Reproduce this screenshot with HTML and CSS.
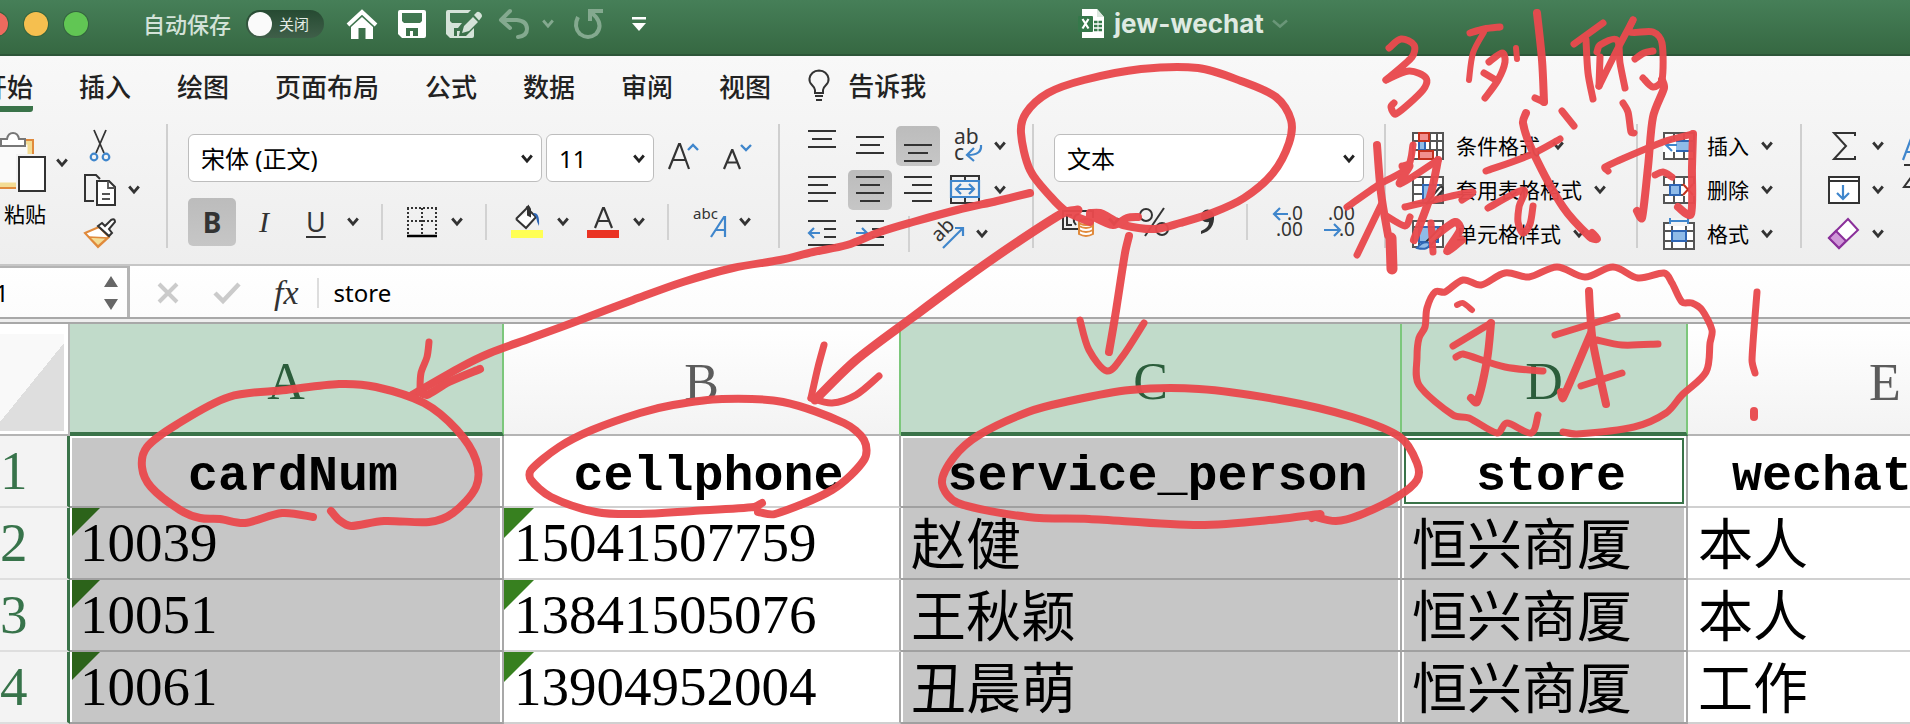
FILE: index.html
```html
<!DOCTYPE html>
<html lang="zh-CN">
<head>
<meta charset="utf-8">
<title>jew-wechat</title>
<link rel="stylesheet" href="styles.css">
</head>
<body>
<svg class="defs" width="0" height="0" aria-hidden="true">
  <symbol id="chev" viewBox="0 0 12 10"><path d="M1.2 1.5 6 7.2 10.8 1.500" fill="none" stroke="currentColor" stroke-width="2.8"/></symbol>
</svg>
<header class="titlebar">
  <div class="lights"><i class="light red"></i><i class="light yellow"></i><i class="light green"></i></div>
  <label class="autosave" for="autosave">自动保存</label>
  <span class="switch"><input type="checkbox" id="autosave"><span>关闭</span></span>
  <div class="quick">
    <button aria-label="主页"><svg width="32" height="30" viewBox="0 0 32 30"><path d="M2 16 16 3 30 16" fill="none" stroke="#fff" stroke-width="4"/><path d="M5 18 16 8 27 18V30H19.500V19H12.500V30H5Z" fill="#fff"/></svg></button>
    <button aria-label="保存"><svg width="28" height="28" viewBox="0 0 28 28"><path fill="#fff" fill-rule="evenodd" d="M2 0H26Q28 0 28 2V26Q28 28 26 28H4L0 24V2Q0 0 2 0ZM4 3V11L6 13H22L24 11V3ZM8 18V26H12V21H15V26H20V18Z"/></svg></button>
    <button aria-label="另存为"><svg width="36" height="30" viewBox="0 0 36 30"><path fill="#d5e3d9" fill-rule="evenodd" d="M2 1H25L22 4H4V12L6 14H16L12 19H8V27H11V22H14L13 27H20L28 19V27Q28 29 26 29H4L0 25V3Q0 1 2 1Z"/><path fill="#d5e3d9" d="M16 24 18 17 27 8 32 13 23 22ZM28 6 31 3Q33 2 35 4.500T35 9L33 11.500Z"/></svg></button>
    <button class="undo" aria-label="撤销"><svg width="32" height="30" viewBox="0 0 32 30"><path d="M12 2 3 11 12 19M4 11H19Q29 12 29 20 29 27 20 28" fill="none" stroke="#84a98f" stroke-width="4" stroke-linecap="round" stroke-linejoin="round"/></svg></button>
    <button class="faded" aria-label="撤销选项"><svg width="12" height="10"><use href="#chev"/></svg></button>
    <button class="redo" aria-label="重做"><svg width="30" height="32" viewBox="0 0 30 32"><path d="M4 9Q-1 19 6 26 14 32 22 26 29 18 22 9L17 4M16 13V3H29" fill="none" stroke="#84a98f" stroke-width="4"/></svg></button>
    <button class="more" aria-label="自定义工具栏"><svg width="14" height="14" viewBox="0 0 14 14"><path d="M0 0H14V2.500H0ZM0 6H14L7 14Z" fill="#fff"/></svg></button>
  </div>
  <div class="doc">
    <svg width="26" height="30" viewBox="0 0 26 30"><path d="M4 0H19L26 8V29H4Z" fill="#fff"/><path d="M19 0V8H26" fill="#dce8df"/><rect y="7" width="15" height="16" rx="1" fill="#35784a"/><path d="M4.500 10 10.500 19.500M10.500 10 4.500 19.500" stroke="#fff" stroke-width="2.200"/><path d="M16 13H19.500M20.500 13H24M16 17H19.500M20.500 17H24M16 21H19.500M20.500 21H24" stroke="#35784a" stroke-width="2.500"/></svg>
    <h1>jew-wechat</h1>
    <svg class="dim" width="16" height="10" viewBox="0 0 16 10"><path d="M1 1.500 8 7.500 15 1.500" fill="none" stroke="#6a9678" stroke-width="2.500"/></svg>
  </div>
</header>

<div class="chrome">
<nav class="tabs">
  <a href="#" class="active">开始</a><a href="#">插入</a><a href="#">绘图</a><a href="#">页面布局</a><a href="#">公式</a><a href="#">数据</a><a href="#">审阅</a><a href="#">视图</a>
  <a href="#" class="tell"><svg width="22" height="34" viewBox="0 0 22 34"><path d="M7 24V21Q7 19 4 16 1 13 1.500 9.500 3 2 11 1.500 19 2 20.500 9.500 21 13 18 16 15 19 15 21V24ZM7 27H15M8 31H14" fill="none" stroke="#333" stroke-width="2"/></svg>告诉我</a>
</nav>

<div class="ribbon">
  <section class="group clip">
    <button class="paste"><svg width="46" height="66" viewBox="0 0 46 66"><path d="M0 10H32V55H0Z" fill="#fafafa"/><path d="M26 10H30V23M0 53H16" fill="none" stroke="#f3dc94" stroke-width="5"/><path d="M26 8H33V22M0 56H16" fill="none" stroke="#e08a3c" stroke-width="2"/><path d="M1 14V7H7Q8 1 13 1T19 7H25V14Z" fill="#fff" stroke="#777" stroke-width="2"/><path d="M16 22H46V61H16Z" fill="#f2f2f2"/><path d="M19 25H45V59H19Z" fill="#fff" stroke="#333" stroke-width="2"/></svg><span>粘贴</span></button>
    <svg class="paste-chev" width="12" height="10"><use href="#chev"/></svg>
    <div class="clip-tools">
      <button aria-label="剪切"><svg width="32" height="34" viewBox="0 0 32 34"><path d="M10 1 20 24M22 1 12 24" stroke="#333" stroke-width="1.800"/><g fill="none" stroke="#3f86cc" stroke-width="2.200"><circle cx="10" cy="28" r="3.300"/><circle cx="22" cy="28" r="3.300"/></g></svg></button>
      <button class="split" aria-label="复制"><svg width="32" height="34" viewBox="0 0 32 34"><path d="M10 28H1V2H12L16 6" fill="none" stroke="#333" stroke-width="2"/><path d="M13 8H25L31 14V32H13Z" fill="#fff" stroke="#333" stroke-width="2"/><path d="M24 8V15H31M18 21H26M18 26H26" fill="none" stroke="#555" stroke-width="1.800"/></svg><svg width="12" height="10"><use href="#chev"/></svg></button>
      <button aria-label="格式刷"><svg width="32" height="32" viewBox="0 0 32 32"><path d="M1 16 15 10 25 20 14 30Z" fill="#fff" stroke="#e08a3c" stroke-width="2"/><path d="M5 20 23 21 14 29Z" fill="#f3dc94" stroke="#e08a3c" stroke-width="1.500"/><path d="M14 9 18 6 21 9 27 3Q31 1 31 5L25 12 28 16 25 19Z" fill="#fff" stroke="#333" stroke-width="2"/></svg></button>
    </div>
  </section>
  <hr>
  <section class="group font">
    <div class="line fields">
      <span class="pick family"><select aria-label="字体"><option>宋体 (正文)</option></select><svg width="12" height="10"><use href="#chev"/></svg></span>
      <span class="pick size"><select aria-label="字号"><option>11</option></select><svg width="12" height="10"><use href="#chev"/></svg></span>
      <button class="grow" aria-label="增大字号"><svg width="30" height="32" viewBox="0 0 30 32"><path d="M1 27 11 2H12L21 27M4.500 18H18" fill="none" stroke="#333" stroke-width="2.200"/><path d="M20 8 25 3 30 8" fill="none" stroke="#3f86cc" stroke-width="2.400"/></svg></button>
      <button class="shrink" aria-label="减小字号"><svg width="28" height="32" viewBox="0 0 28 32"><path d="M1 27 9 8H9.500L17 27M4 20.500H15" fill="none" stroke="#333" stroke-width="2.200"/><path d="M18 3 23 8 28 3" fill="none" stroke="#3f86cc" stroke-width="2.400"/></svg></button>
    </div>
    <div class="line">
      <button class="bold on">B</button>
      <button class="italic">I</button>
      <button class="split under"><u>U</u><svg width="12" height="10"><use href="#chev"/></svg></button>
      <i class="sep"></i>
      <button class="split" aria-label="边框"><svg width="30" height="32" viewBox="0 0 30 32"><path d="M0 2H30M1 2V28M29 2V28M15 2V28M0 15H30" fill="none" stroke="#333" stroke-width="2" stroke-dasharray="2 2"/><path d="M0 30H30" stroke="#000" stroke-width="2.500"/></svg><svg width="12" height="10"><use href="#chev"/></svg></button>
      <i class="sep"></i>
      <button class="split" aria-label="填充颜色"><svg width="32" height="34" viewBox="0 0 32 34"><path d="M5 14 17 2V10L19 11V4Q17-1 15 4M5 14 15 23 25 12 19 6" fill="#fff" stroke="#333" stroke-width="2"/><path d="M22 8Q29 7 28 21 26 18 25 12Z" fill="#2e66b5"/><path d="M0 25H32V33H0Z" fill="#ffff54"/></svg><svg width="12" height="10"><use href="#chev"/></svg></button>
      <button class="split colour" aria-label="字体颜色"><svg width="32" height="34" viewBox="0 0 32 34"><path d="M8 23 16 3H17L25 23M11 16H22" fill="none" stroke="#333" stroke-width="2.200"/><path d="M0 25H32V33H0Z" fill="#ea3323"/></svg><svg width="12" height="10"><use href="#chev"/></svg></button>
      <i class="sep"></i>
      <button class="split phon" aria-label="拼音"><svg width="34" height="34" viewBox="0 0 34 34"><text x="0" y="14" font-size="15">abc</text><path d="M18 32 31 12H32V32M23 25H32" fill="none" stroke="#3f86cc" stroke-width="2.200"/></svg><svg width="12" height="10"><use href="#chev"/></svg></button>
    </div>
  </section>
  <hr>
  <section class="group align">
    <div class="line">
      <button aria-label="顶端对齐"><svg width="44" height="40"><path d="M8 5H36M12 13H32M8 21H36"/></svg></button>
      <button aria-label="垂直居中"><svg width="44" height="40"><path d="M8 11H36M12 19H32M8 27H36"/></svg></button>
      <button class="on" aria-label="底端对齐"><svg width="44" height="40"><path d="M8 19H36M12 27H32M8 35H36"/></svg></button>
      <button class="split after" aria-label="自动换行"><svg width="32" height="34" viewBox="0 0 32 34"><text x="4" y="15" font-size="21">ab</text><text x="4" y="31" font-size="21">c</text><path d="M31 16Q32 26 18 26M24 19 17 26 24 32" class="blue"/></svg><svg width="12" height="10"><use href="#chev"/></svg></button>
    </div>
    <div class="line">
      <button aria-label="左对齐"><svg width="44" height="40"><path d="M8 7H36M8 15H28M8 23H36M8 31H28"/></svg></button>
      <button class="on" aria-label="居中"><svg width="44" height="40"><path d="M8 7H36M12 15H32M8 23H36M12 31H32"/></svg></button>
      <button aria-label="右对齐"><svg width="44" height="40"><path d="M8 7H36M16 15H36M8 23H36M16 31H36"/></svg></button>
      <button class="split after" aria-label="合并后居中"><svg width="32" height="34" viewBox="0 0 32 34"><path d="M1 8V3H29V8M1 25V30H29V25M15 3V8M15 25V30" fill="#fff"/><path d="M1 8H29V24H1ZM6 16H24M11 11 6 16 11 21M19 11 24 16 19 21" class="blue white"/></svg><svg width="12" height="10"><use href="#chev"/></svg></button>
    </div>
    <div class="line">
      <button aria-label="减少缩进"><svg width="44" height="40"><path d="M8 7H36M24 15H36M24 23H36M8 31H36"/><path d="M20 19H9M14 14 9 19 14 24" class="blue"/></svg></button>
      <button aria-label="增加缩进"><svg width="44" height="40"><path d="M8 7H36M24 15H36M24 23H36M8 31H36"/><path d="M8 19H19M14 14 19 19 14 24" class="blue"/></svg></button>
      <i class="sep orient"></i>
      <button class="split" aria-label="方向"><svg width="32" height="34" viewBox="0 0 32 34"><text x="7" y="26" font-size="20" transform="rotate(-45 7 26)">ab</text><path d="M11 31 31 11M23 11H31V19" class="blue"/></svg><svg width="12" height="10"><use href="#chev"/></svg></button>
    </div>
  </section>
  <hr>
  <section class="group number">
    <span class="pick format"><select aria-label="数字格式"><option>文本</option></select><svg width="12" height="10"><use href="#chev"/></svg></span>
    <div class="line">
      <button class="split" aria-label="会计数字格式"><svg width="32" height="32" viewBox="0 0 32 32"><path d="M16 23H1V5H31V12M10 9H5V19H10M17 8Q11 9 12 16L14 19" fill="none" stroke="#333" stroke-width="2"/><path d="M17 16V28Q24 32 31 28V16M17 20Q24 24 31 20M17 24Q24 28 31 24" fill="#fff" stroke="#e08a3c" stroke-width="2"/><ellipse cx="24" cy="16" rx="7" ry="3" fill="#fff" stroke="#e08a3c" stroke-width="2"/></svg><svg width="12" height="10"><use href="#chev"/></svg></button>
      <button class="percent" aria-label="百分比"><svg width="30" height="32" viewBox="0 0 30 32"><g fill="none" stroke="#333" stroke-width="2"><circle cx="7" cy="9" r="6"/><circle cx="23" cy="23" r="6"/><path d="M25 2 6 30"/></g></svg></button>
      <button class="comma" aria-label="千位分隔"><svg width="16" height="28" viewBox="0 0 16 28"><path d="M1 8A6 6 0 0 1 14 8Q15 22 1 26V23Q9 20 9 14 1 15 1 8Z" fill="#333"/></svg></button>
      <i class="sep"></i>
      <button aria-label="增加小数位数"><svg width="32" height="34" viewBox="0 0 32 34"><text x="15" y="15" font-size="19">.0</text><text x="4" y="31" font-size="19">.00</text><path d="M16 9H2M8 3 2 9 8 15" fill="none" stroke="#3f86cc" stroke-width="2.200"/></svg></button>
      <button class="dec" aria-label="减少小数位数"><svg width="32" height="34" viewBox="0 0 32 34"><text x="4" y="15" font-size="19">.00</text><text x="15" y="31" font-size="19">.0</text><path d="M0 25H15M10 19 16 25 10 31" fill="none" stroke="#3f86cc" stroke-width="2.200"/></svg></button>
    </div>
  </section>
  <hr>
  <section class="group menu styles">
    <button><svg width="32" height="28" viewBox="0 0 32 28"><path d="M1 1H31V27H1ZM1 9H31M1 18H31M18 1V27M25 1V27M7 1V27" class="grid"/><path d="M7 9H13V18H7Z" fill="#8fbbe8" stroke="#2e66b5" stroke-width="2"/><path d="M7 1H17V9H7ZM7 19H21V27H7Z" fill="#f28f8f" stroke="#c4311f" stroke-width="2"/></svg><span>条件格式</span><svg width="12" height="10"><use href="#chev"/></svg></button>
    <button><svg width="32" height="28" viewBox="0 0 32 28"><path d="M1 1H31V27H1ZM1 9H31M1 18H31M11 1V27M21 1V27" class="grid"/><path d="M11 27V9H27" fill="none" stroke="#2e66b5" stroke-width="2"/><path d="M12 10H25L14 26H12Z" fill="#8fbbe8"/><path d="M14 28 27 12Q31 9 31 14L21 25Z" fill="#fff" stroke="#333" stroke-width="2"/></svg><span>套用表格格式</span><svg width="12" height="10"><use href="#chev"/></svg></button>
    <button><svg width="32" height="28" viewBox="0 0 32 28"><path d="M1 1H31V27H1ZM1 7H31M7 1V27" class="grid"/><path d="M7 7H26V22H7Z" fill="#8fbbe8" stroke="#2e66b5" stroke-width="2"/><path d="M14 22 27 9Q32 7 30 13L19 25Z" fill="#fff" stroke="#333" stroke-width="2"/><path d="M5 28Q11 20 18 23 17 31 5 28Z" fill="#8fbbe8" stroke="#2e66b5" stroke-width="2"/></svg><span>单元格样式</span><svg width="12" height="10"><use href="#chev"/></svg></button>
  </section>
  <hr>
  <section class="group menu cells">
    <button><svg width="32" height="28" viewBox="0 0 32 28"><path d="M1 1H31V27H1ZM1 9H31M1 19H31M11 1V27M21 1V27" class="grid"/><path d="M11 9H31V19H11Z" fill="#8fbbe8" stroke="#2e66b5" stroke-width="2"/><path d="M0 8H13V20H0Z" fill="#fff"/><path d="M14 13H3M9 7 3 13 9 19" fill="none" stroke="#3f86cc" stroke-width="2"/></svg><span>插入</span><svg width="12" height="10"><use href="#chev"/></svg></button>
    <button><svg width="32" height="28" viewBox="0 0 32 28"><path d="M1 1H31V27H1ZM1 9H31M1 19H31M11 1V27M21 1V27" class="grid"/><path d="M0 10H6V18H0Z" fill="#f1f1f1"/><path d="M7 9H17V19H7Z" fill="#8fbbe8" stroke="#2e66b5" stroke-width="2"/><path d="M20 8H32V20H20Z" fill="#fff"/><path d="M20 8 30 19M30 8 20 19" stroke="#c4311f" stroke-width="2"/></svg><span>删除</span><svg width="12" height="10"><use href="#chev"/></svg></button>
    <button><svg width="32" height="32" viewBox="0 0 32 32"><path d="M1 5H31V31H1ZM1 13H31M1 23H31M9 5V31M23 5V31" class="grid"/><path d="M6 0H26V8H6Z" fill="#f3f3f3"/><path d="M9 13H23V23H9Z" fill="#8fbbe8" stroke="#2e66b5" stroke-width="2"/><path d="M7 0V6M25 0V6M7 3H25" stroke="#3f86cc" stroke-width="2"/></svg><span>格式</span><svg width="12" height="10"><use href="#chev"/></svg></button>
  </section>
  <hr>
  <section class="group menu edit">
    <button aria-label="自动求和"><svg width="32" height="28" viewBox="0 0 32 28"><path d="M27 4V1H6L18 14 6 27H27V24" fill="none" stroke="#333" stroke-width="2"/></svg><svg width="12" height="10"><use href="#chev"/></svg></button>
    <button aria-label="填充"><svg width="32" height="28" viewBox="0 0 32 28"><path d="M1 1H31V27H1ZM1 5H31" fill="#fff" stroke="#333" stroke-width="2"/><path d="M15 9V23M9 17 15 23 21 17" fill="none" stroke="#3f86cc" stroke-width="2.200"/></svg><svg width="12" height="10"><use href="#chev"/></svg></button>
    <button aria-label="清除"><svg width="32" height="32" viewBox="0 0 32 32"><path d="M1 20 20 1 30 12 11 30Z" fill="#fff" stroke="#8a2f9a" stroke-width="2"/><path d="M1 20 8 13 18 23 11 30Z" fill="#cf97d8" stroke="#8a2f9a" stroke-width="2"/></svg><svg width="12" height="10"><use href="#chev"/></svg></button>
  </section>
  <button class="sort" aria-label="排序和筛选"><svg width="32" height="64" viewBox="0 0 32 64"><path d="M1 28 10 4H11L20 28M4 20H17" fill="none" stroke="#3f86cc" stroke-width="2.200"/><path d="M2 33H18L2 55H20" fill="none" stroke="#333" stroke-width="2"/></svg></button>
</div>
</div>

<div class="formula">
  <div class="namebox"><input aria-label="名称框" value="1"><svg width="14" height="34" viewBox="0 0 14 34"><path d="M0 11 7 0 14 11ZM0 23H14L7 34Z" fill="#666"/></svg></div>
  <button aria-label="取消"><svg width="24" height="24" viewBox="0 0 24 24"><path d="M3 3 21 21M21 3 3 21" stroke="#cbcbcb" stroke-width="4"/></svg></button>
  <button aria-label="输入"><svg width="28" height="24" viewBox="0 0 28 24"><path d="M2 12 10 20 26 3" fill="none" stroke="#cbcbcb" stroke-width="4.500"/></svg></button>
  <button class="fx">fx</button>
  <input class="content" aria-label="编辑栏" value="store">
</div>

<main class="sheet">
<table>
  <colgroup><col class="c0"><col class="ca"><col class="cb"><col class="cc"><col class="cd"><col class="ce"></colgroup>
  <thead><tr><th class="corner"></th><th class="sel">A</th><th class="before">B</th><th class="sel">C</th><th class="sel">D</th><th>E</th></tr></thead>
  <tbody>
    <tr class="names"><th>1</th><td class="sel">cardNum</td><td>cellphone</td><td class="sel">service_person</td><td class="current">store</td><td class="cut">wechat</td></tr>
    <tr><th>2</th><td class="sel err">10039</td><td class="err">15041507759</td><td class="sel han">赵健</td><td class="sel han">恒兴商厦</td><td class="han">本人</td></tr>
    <tr><th>3</th><td class="sel err">10051</td><td class="err">13841505076</td><td class="sel han">王秋颖</td><td class="sel han">恒兴商厦</td><td class="han">本人</td></tr>
    <tr><th>4</th><td class="sel err">10061</td><td class="err">13904952004</td><td class="sel han">丑晨萌</td><td class="sel han">恒兴商厦</td><td class="han">工作</td></tr>
  </tbody>
</table>
</main>

<svg class="ink" viewBox="0 0 1910 724" role="img" aria-label="3列的格式为文本！"></svg>
<script src="ink.js"></script>
</body>
</html>
```
FILE: styles.css
```css
* { box-sizing: border-box; }
body {
  margin: 0;
  position: relative;
  min-height: 100vh;
  overflow: hidden;
  display: flex;
  flex-direction: column;
  background: #fff;
  color: #000;
  font-family: "Noto Sans", "Noto Sans CJK SC", sans-serif;
}
.defs { position: absolute; }
button {
  margin: 0;
  padding: 0;
  border: 0;
  background: none;
  color: #333;
  font: inherit;
  flex: none;
}
svg { display: block; flex: none; overflow: visible; }
a { color: inherit; text-decoration: none; }

/* title bar */
.titlebar {
  position: relative;
  height: 56px;
  padding-bottom: 6px;
  display: flex;
  align-items: center;
  background: linear-gradient(#467f58, #366842);
  border-bottom: 2px solid #2d5639;
}
.lights { display: flex; gap: 16px; margin-left: -16px; }
.light { width: 24px; height: 24px; border-radius: 50%; box-shadow: 0 0 0 1px #33633e; }
.red { background: #ee6a5e; }
.yellow { background: #f5bf4f; }
.green { background: #61c654; }
.autosave { margin-left: 55px; font-size: 22px; line-height: 30px; color: #d3e2d8; font-weight: 500; }
.switch {
  display: flex;
  align-items: center;
  gap: 7px;
  width: 78px;
  height: 28px;
  margin-left: 15px;
  padding-left: 2px;
  border-radius: 14px;
  background: linear-gradient(#264a32, #3f5f49);
  color: #e4ece6;
  font-size: 15px;
  line-height: 28px;
}
.switch input {
  appearance: none;
  margin: 0;
  width: 24px;
  height: 24px;
  border-radius: 50%;
  background: #fafafa;
}
.quick { display: flex; align-items: center; gap: 20px; margin-left: 22px; }
.quick .undo { margin-left: -4px; }
.quick .faded { color: #84a98f; margin-left: -8px; }
.quick .more { margin-left: 8px; }
.doc { position: absolute; left: 1078px; top: 8px; display: flex; align-items: center; gap: 10px; }
.doc h1 { margin: 0; font: 700 26px/32px Inter, sans-serif; color: #dfeae2; }
.doc .dim { margin-left: -2px; }

/* tabs */
.chrome { background: linear-gradient(#f8f8f8, #eeeeee); border-bottom: 2px solid #c6c6c6; }
.tabs { height: 56px; display: flex; gap: 46px; overflow: hidden; white-space: nowrap; }
.tabs a { font-size: 26px; line-height: 62px; font-weight: 500; color: #222; height: 56px; flex: none; }
.tabs .active { margin-left: -19px; border-bottom: 6px solid #3a7349; border-radius: 0 0 3px 3px; }
.tabs .tell { display: flex; align-items: center; gap: 18px; margin-left: -9px; padding-top: 3px; }

/* ribbon */
.ribbon { height: 152px; display: flex; overflow: hidden; }
.ribbon hr { flex: none; width: 2px; height: 124px; margin: 12px 0 0; border: 0; background: #cfcfcf; }
.group { flex: none; color: #333; }
.line { display: flex; align-items: center; }
.split { display: flex; align-items: center; gap: 14px; }
.on { background: linear-gradient(#bcbcbc, #c6c6c6); border-radius: 5px; }
.sep { flex: none; width: 2px; height: 36px; margin: 0 24px 0 22px; background: #d2d2d2; }
.ribbon text { font-family: "Noto Sans", sans-serif; fill: #333; }

.clip { display: flex; width: 166px; }
.paste { align-self: flex-start; width: 48px; padding-top: 20px; text-align: left; color: #000; }
.paste span { display: block; padding-left: 4px; font-size: 21px; line-height: 32px; white-space: nowrap; }
.paste-chev { margin: 46px 16px 0 8px; }
.clip-tools { display: flex; flex-direction: column; align-items: flex-start; gap: 10px; padding-top: 17px; }
.clip-tools .split { gap: 12px; }

.font { width: 610px; padding: 22px 0 0 20px; }
.fields { margin-bottom: 16px; }
.font .line, .number .line { height: 48px; }
.pick { position: relative; display: block; height: 48px; }
.pick select {
  appearance: none;
  width: 100%;
  height: 48px;
  padding: 2px 12px 0;
  border: 1px solid #bdbdbd;
  border-radius: 6px;
  background: #fff;
  color: #000;
  font: 24px/44px "Noto Sans", "Noto Sans CJK SC", sans-serif;
}
.pick svg { position: absolute; right: 9px; top: 20px; color: #222; }
.family { width: 354px; }
.size { width: 108px; margin-left: 4px; }
.grow { margin-left: 14px; }
.shrink { margin-left: 25px; }
.bold { width: 48px; height: 48px; font-size: 28px; font-weight: 700; line-height: 44px; }
.italic { width: 16px; margin-left: 20px; font: italic 30px/40px "Liberation Serif", serif; }
.under { margin-left: 34px; gap: 21px; font-size: 27px; line-height: 36px; }
.under u { text-decoration-thickness: 2px; text-underline-offset: 4px; }
.colour { margin-left: 18px; }
.phon { gap: 12px; }

.align { padding: 12px 26px 0 20px; }
.align .line { height: 44px; gap: 4px; }
.align button svg path { stroke: #333; stroke-width: 2; fill: none; }
.align button path.blue { stroke: #3f86cc; stroke-width: 2.200px; }
.align .split { gap: 12px; }
.align .after { margin-left: 6px; }
.align button.on { height: 40px; }
.align .sep { margin: 0 18px 0 12px; }

.number { padding: 22px 20px 0 20px; }
.format { width: 310px; margin-bottom: 16px; }
.number .line { padding-left: 8px; }
.percent { margin-left: 19px; }
.comma { margin-left: 31px; margin-right: 8px; }
.dec { margin-left: 20px; }

.menu { padding-top: 12px; }
.menu button { display: flex; align-items: center; gap: 12px; height: 44px; color: #000; font-size: 21px; line-height: 28px; white-space: nowrap; }
.menu button svg:last-child { color: #333; }
.grid { fill: #fff; stroke: #555; stroke-width: 2; }
.styles { width: 250px; padding-left: 26px; }
.cells { width: 162px; padding-left: 25px; }
.edit { width: 100px; padding-left: 26px; }
.sort { align-self: flex-start; margin-top: 20px; }

/* formula bar */
.formula {
  display: flex;
  align-items: center;
  height: 58px;
  padding-bottom: 2px;
  border-bottom: 2px solid #a8a8a8;
  background: linear-gradient(#fff, #fcfcfc 51px, #a8a8a8 51px, #a8a8a8 53px, #eee 53px);
}
.namebox {
  display: flex;
  align-items: center;
  align-self: flex-start;
  width: 130px;
  height: 51px;
  padding-right: 10px;
  border-top: 2px solid #b4b4b4;
  border-right: 3px solid #b4b4b4;
}
.formula input { border: 0; outline: 0; background: none; padding: 0; font: 24px/36px "Noto Sans", sans-serif; color: #000; }
.namebox input { width: 103px; margin-left: -5px; margin-right: 6px; }
.formula button { margin-left: 26px; }
.formula button + button { margin-left: 33px; }
.formula .fx { font: italic 34px/40px "Liberation Serif", serif; color: #333; }
.formula .content { flex: 1; margin-left: 18px; padding-left: 15px; border-left: 2px solid #ddd; height: 30px; }

/* sheet */
.sheet { flex: 1; overflow: hidden; }
table { table-layout: fixed; width: 2084px; border-collapse: separate; border-spacing: 0; }
.c0 { width: 70px; } .ca { width: 434px; } .cb { width: 397px; } .cc { width: 501px; } .cd { width: 286px; } .ce { width: 396px; }
th, td { padding: 0; font-weight: 400; }
thead th {
  height: 112px;
  padding-top: 8px;
  border-right: 2px solid #b8b8b8;
  border-bottom: 2px solid #b4b4b4;
  background: linear-gradient(#fff, #f3f3f3);
  color: #5c5c5c;
  font: 52px/60px "Liberation Serif", serif;
}
thead .before { border-right-color: #7cc77b; }
thead .sel {
  border-bottom: 4px solid #3a7349;
  border-right: 2px solid #7cc77b;
  background: #c1dbca;
  color: #2b5d3b;
}
thead .corner { background: linear-gradient(129deg, #f9f9f9 50%, #dedede 50%) no-repeat 0 10px / 64px 97px, #fff; }
tbody th {
  border-right: 3px solid #3a7349;
  border-bottom: 2px solid #dedede;
  background: #f3f3f3;
  color: #37734a;
  font: 55px/70px "Liberation Serif", serif;
  text-align: left;
}
tbody td {
  position: relative;
  height: 72px;
  padding-left: 10px;
  border-right: 2px solid #a8a8a8;
  border-bottom: 2px solid #d0d0d0;
  font: 55px/70px "Liberation Serif", serif;
  white-space: nowrap;
}
tbody .sel { background: #c6c6c6; border-bottom-color: #a0a0a0; box-shadow: inset 2px 0 #fff, inset -2px 0 #fff; }
tbody td.han { padding-bottom: 6px; font: 55px/64px "Noto Sans CJK SC", sans-serif; }
.names td { padding: 12px 0 0 14px; font: 700 50px/58px "Liberation Mono", monospace; text-align: center; }
.names .sel { box-shadow: inset 2px 0 #fff, inset -2px 0 #fff, inset 0 2px #fff; }
.names .current { box-shadow: inset 0 0 0 2px #fff, inset 0 0 0 4px #3a7349; border-bottom-color: #a0a0a0; }
.names .cut { padding-left: 44px; text-align: left; }
.err::before {
  content: "";
  position: absolute;
  left: 0;
  top: 0;
  width: 30px;
  height: 30px;
  background: #37801f;
  clip-path: polygon(0 0, 100% 0, 0 100%);
}
.sel.err::before { left: 2px; width: 28px; height: 28px; background: #2c631a; }

/* pen marks over the window */
.ink { position: absolute; left: 0; top: 0; width: 1910px; height: 724px; pointer-events: none; }
.ink path { fill: none; stroke: #e94a4e; stroke-width: 8; stroke-linecap: round; stroke-linejoin: round; }
.ink g { opacity: 0.960; }
```
FILE: ink.js
```js
// Pen strokes as "x,y" points; each is drawn as a smooth curve. A leading "w12:" sets the pen width.
const strokes = [
  // ring round the format field
  "1090,222 1067,212 1051,197 1030,170 1021,133 1026,113 1048,93 1084,80 1141,69 1198,68 1241,81 1276,97 1291,120 1289,143 1273,173 1244,198 1212,213 1180,223 1155,229 1123,225 1110,218 1100,213 1090,213",
  "1090,215 1113,225 1127,218 1138,217",
  // arrow to A
  "1030,193 997,201 957,210 913,222 880,232 847,245 813,252 780,260 733,268 683,282 633,300 580,320 531,338 490,353 461,367 412,395",
  "w7:429,342 427,357 421,373 420,390", "420,392 427,395 449,382 480,369",
  // arrow to B
  "w9:1078,210 1063,213 1013,245 963,280 913,317 856,360 815,400",
  "w7:824,345 818,367 811,398", "w7:811,398 832,403 856,395 879,376",
  // arrow to C
  "1129,236 1125,253 1115,317 1109,352", "w7:1080,320 1089,350 1107,371 1122,357 1144,323",
  // rings round the names
  "313,517 282,513 245,523 220,519 200,518 180,510 151,487 142,467 147,447 176,425 229,397 286,390 339,384 376,387 424,403 457,430 476,460 476,487 453,513 429,522 384,521 351,526 339,520 331,511",
  "762,503 754,507 693,511 640,514 596,512 551,497 531,480 531,470 559,447 592,430 640,413 673,405 722,399 783,402 844,423 864,440 864,460 832,490 775,514 758,512",
  "1312,518 1320,514 1280,519 1199,525 1089,519 1028,517 958,503 942,483 954,457 979,435 1028,412 1065,402 1130,390 1199,389 1280,400 1352,417 1400,437 1417,463 1417,480 1397,497 1360,515 1336,521 1312,516",
  // cloud
  "w7:1563,432 1577,434 1634,427 1666,413 1682,395 1706,372 1710,343 1712,330 1702,310 1692,303 1682,302 1672,283 1664,273 1638,278 1613,267 1585,277 1557,267 1529,277 1505,273 1481,285 1463,280 1445,292 1435,292 1427,308 1425,327 1419,338 1417,357 1419,385 1453,415 1469,418 1497,433 1507,423 1531,433 1538,415",
  // 文
  "w6:1457,305 1463,303 1472,310", "w7:1453,346 1491,323", "1491,323 1487,360 1477,402 1471,398", "w7:1456,357 1463,354 1505,367 1543,371",
  // 本
  "1589,291 1590,310 1593,343 1606,404", "w7:1555,335 1617,316", "1591,333 1563,398 1561,392", "w7:1597,340 1622,345 1658,344", "w7:1581,386 1622,373",
  // exclamation mark
  "w7:1757,292 1752,360 1755,373", "1754,411 1754,417",
  // 3
  "w7:1389,48 1401,39 1414,45 1412,57 1386,80", "w7:1386,80 1409,71 1426,78 1423,90 1396,114 1391,107 1394,103",
  // 列
  "w7:1470,33 1484,29 1500,27", "w6:1484,32 1473,53 1469,80", "w7:1489,62 1502,53 1505,62 1498,80 1485,98", "w7:1484,73 1494,79", "w6:1516,48 1517,59", "w8:1537,13 1542,60 1544,102", "w7:1544,102 1535,98",
  // 的
  "w7:1574,44 1603,23", "w7:1586,40 1588,73 1593,99", "w7:1597,52 1600,45 1617,40 1620,63 1625,88", "w7:1600,57 1599,86", "w7:1599,86 1616,52 1633,20", "w7:1633,20 1630,32 1653,32 1662,43 1662,80 1653,87 1643,78", "w7:1635,59 1644,53 1653,51",
  // 格
  "1377,145 1381,193 1388,235", "w11:1391,238 1392,269", "w7:1347,207 1380,184 1407,168 1413,145", "w7:1382,203 1357,255", "w7:1385,215 1405,226 1410,217", "w7:1402,166 1410,166 1400,184 1438,160", "1438,160 1430,197 1414,240", "w7:1405,207 1430,201 1472,192 1462,200", "w7:1431,223 1433,252", "1435,236 1455,222 1460,230 1447,251 1462,240",
  // 式
  "w7:1486,171 1530,155 1560,139", "w8:1526,113 1523,123 1533,152 1563,207 1590,237 1597,239 1592,233", "w7:1488,208 1523,190 1519,207 1518,222 1523,233 1530,224 1533,206", "w7:1562,111 1574,126",
  // 为
  "w7:1623,103 1628,112 1631,132 1634,133", "1662,80 1664,88 1653,117 1648,167 1642,218 1637,211", "w7:1608,171 1605,167 1663,142 1693,134", "1693,134 1692,167 1691,214 1678,207", "w7:1655,175 1663,172 1672,177"
];

const NS = "http://www.w3.org/2000/svg";
const layer = document.createElementNS(NS, "g");

function curve(points) {
  let d = "M" + points[0].join(" ");
  for (let i = 0; i < points.length - 1; i++) {
    const a = points[Math.max(i - 1, 0)], b = points[i], c = points[i + 1], e = points[Math.min(i + 2, points.length - 1)];
    const len = Math.hypot(c[0] - b[0], c[1] - b[1]);
    const k1 = Math.min(1 / 6, len / 3 / (Math.hypot(c[0] - a[0], c[1] - a[1]) || 1));
    const k2 = Math.min(1 / 6, len / 3 / (Math.hypot(e[0] - b[0], e[1] - b[1]) || 1));
    d += "C" + [b[0] + (c[0] - a[0]) * k1, b[1] + (c[1] - a[1]) * k1, c[0] - (e[0] - b[0]) * k2, c[1] - (e[1] - b[1]) * k2, c[0], c[1]].join(" ");
  }
  return d;
}

for (const stroke of strokes) {
  const match = stroke.match(/^(?:w(\d+):)?(.*)$/);
  const path = document.createElementNS(NS, "path");
  path.setAttribute("d", curve(match[2].split(" ").map(p => p.split(",").map(Number))));
  if (match[1]) path.style.strokeWidth = match[1];
  layer.appendChild(path);
}
document.querySelector(".ink").appendChild(layer);
```
